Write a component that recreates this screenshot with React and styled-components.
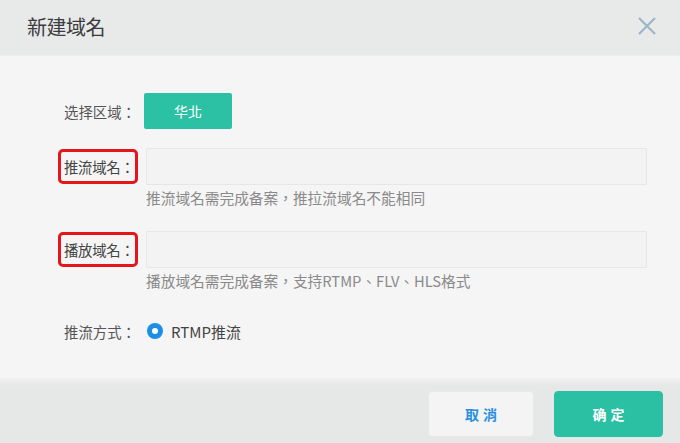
import React from 'react'
import styled, { createGlobalStyle } from 'styled-components'

const GlobalStyle = createGlobalStyle`
    html, body {
        margin: 0;
        padding: 0;
        background: #f3f3f3;
        font-family: "Noto Sans CJK TC", "Noto Sans CJK SC", "Liberation Sans", sans-serif;
    }
`

const Dialog = styled.div`
    width: 680px;
    height: 443px;
    display: flex;
    flex-direction: column;
    background: #f4f4f4;
    overflow: hidden;
`

const Header = styled.div`
    height: 55px;
    display: flex;
    align-items: center;
    justify-content: space-between;
    padding: 0 22px 0 27px;
    background: #e8e9e9;
    border-bottom: 1px solid #efefef;
`

const Title = styled.div`
    font-size: 20px;
    color: #3c3c3c;
    letter-spacing: -0.5px;
    margin-top: -2px;
`

const Close = styled.button`
    width: 22px;
    height: 22px;
    padding: 0;
    margin-top: -3px;
    border: none;
    background: none;
    display: flex;
    align-items: center;
    justify-content: center;
`

const Body = styled.div`
    flex: 1;
    padding: 37px 33px 0 58px;
    background: #f5f5f5;
`

const Row = styled.div`
    display: flex;
    align-items: center;
    height: ${(p) => p.h || 37}px;
    margin-top: ${(p) => p.mt || 0}px;
`

const Label = styled.div`
    width: 86px;
    flex: none;
    box-sizing: border-box;
    padding-left: 6px;
    font-size: 14.4px;
    color: #555;
    white-space: nowrap;
`

const MarkedLabel = styled.div`
    width: 80px;
    height: 35px;
    margin-right: 8px;
    flex: none;
    box-sizing: border-box;
    border: 3px solid #e4161b;
    border-radius: 5px;
    display: flex;
    align-items: center;
    padding-left: 3px;
    font-size: 14.4px;
    color: #444;
    white-space: nowrap;
    letter-spacing: -0.3px;
`

const Region = styled.button`
    width: 88px;
    height: 36px;
    border: none;
    border-radius: 2px;
    background: #2cc1a5;
    color: #fff;
    font-family: inherit;
    font-size: 14px;
`

const Input = styled.input`
    flex: 1;
    height: 37px;
    box-sizing: border-box;
    border: 1px solid #e6e6e6;
    background: #f3f3f3;
    border-radius: 1px;
`

const Hint = styled.div`
    margin: 3px 0 0 88px;
    font-size: 14.7px;
    line-height: 20px;
    color: #8a8a8a;
    white-space: nowrap;
`

const Radio = styled.span`
    width: 16px;
    height: 16px;
    border-radius: 50%;
    background: #1b8fe6;
    display: inline-flex;
    align-items: center;
    justify-content: center;
    margin: 0 8px 0 3px;
    &::after {
        content: '';
        width: 6px;
        height: 6px;
        border-radius: 50%;
        background: #fff;
    }
`

const RadioText = styled.span`
    font-size: 15px;
    color: #444;
`

const Footer = styled.div`
    height: 65px;
    display: flex;
    justify-content: flex-end;
    align-items: flex-start;
    gap: 20px;
    padding: 13px 17px 0 0;
    box-sizing: border-box;
    background: linear-gradient(#f0f0f0, #e6e7e7 8px);
`

const Button = styled.button`
    width: ${(p) => (p.primary ? 109 : 106)}px;
    height: 46px;
    border-radius: 4px;
    border: 1px solid ${(p) => (p.primary ? '#2bbfa3' : '#e8e8e8')};
    background: ${(p) => (p.primary ? '#2bbfa3' : '#f4f4f4')};
    color: ${(p) => (p.primary ? '#fff' : '#2a8ee0')};
    font-family: inherit;
    font-size: 14px;
    font-weight: 700;
    letter-spacing: 4px;
    text-indent: 4px;
`

export default function App() {
    return (
        <Dialog>
            <GlobalStyle />
            <Header>
                <Title>新建域名</Title>
                <Close>
                    <svg width="18" height="18" viewBox="0 0 18 18">
                        <path d="M1 1L17 17M17 1L1 17" stroke="#9db3c6" strokeWidth="2" />
                    </svg>
                </Close>
            </Header>
            <Body>
                <Row h={36}>
                    <Label>选择区域：</Label>
                    <Region>华北</Region>
                </Row>
                <Row mt={19}>
                    <MarkedLabel>推流域名：</MarkedLabel>
                    <Input />
                </Row>
                <Hint>推流域名需完成备案，推拉流域名不能相同</Hint>
                <Row mt={23}>
                    <MarkedLabel>播放域名：</MarkedLabel>
                    <Input />
                </Row>
                <Hint>播放域名需完成备案，支持RTMP、FLV、HLS格式</Hint>
                <Row h={20} mt={30}>
                    <Label>推流方式：</Label>
                    <Radio />
                    <RadioText>RTMP推流</RadioText>
                </Row>
            </Body>
            <Footer>
                <Button>取消</Button>
                <Button primary>确定</Button>
            </Footer>
        </Dialog>
    )
}
